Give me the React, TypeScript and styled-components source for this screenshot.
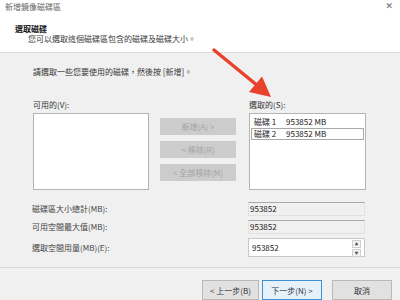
import styled, { createGlobalStyle } from 'styled-components';

const GlobalStyle = createGlobalStyle`
	html, body {
		margin: 0;
		padding: 0;
		background: #f0f0f0;
	}
	body {
		font-family: "Noto Sans CJK TC", "Noto Sans", "Liberation Sans", sans-serif;
		font-size: 8px;
		color: #353535;
	}
`;

const Dialog = styled.div`
	position: relative;
	width: 400px;
	height: 300px;
	overflow: hidden;
	display: flex;
	flex-direction: column;
	background: #f0f0f0;
`;

const Header = styled.div`
	height: 53px;
	background: #ffffff;
	border-bottom: 1px solid #d9d9d9;
	display: flex;
	flex-direction: column;
`;

const TitleBar = styled.div`
	height: 13px;
	padding: 0 7px 0 5px;
	display: flex;
	align-items: center;
	justify-content: space-between;
	color: #666;
	line-height: 13px;
`;

const Close = styled.span`
	font-family: "DejaVu Sans", sans-serif;
	font-size: 9px;
	color: #666;
`;

const Heading = styled.div`
	margin: 11px 0 0 15px;
	font-weight: 700;
	line-height: 10px;
	color: #111;
`;

const SubHeading = styled.div`
	margin-left: 28px;
	line-height: 10px;
	color: #3a3a3a;
`;

const Body = styled.div`
	height: 218px;
	padding: 14px 0 0 33px;
	box-sizing: border-box;
	border-bottom: 1px solid #dadada;
`;

const Text = styled.div`
	line-height: 10px;
`;

const Lists = styled.div`
	display: flex;
	margin-top: 23px;
`;

const Column = styled.div<{ $width: number }>`
	width: ${({ $width }) => $width}px;
	display: flex;
	flex-direction: column;
	gap: 3px;
`;

const ListBox = styled.div`
	height: 77px;
	box-sizing: border-box;
	background: #ffffff;
	border: 1px solid #b4b4b4;
	padding: 2px 1px;
`;

const ListItem = styled.div<{ $focused?: boolean }>`
	display: flex;
	height: 10px;
	line-height: 10px;
	padding-left: 2px;
	border: 1px solid ${({ $focused }) => ($focused ? '#a8a8a8' : 'transparent')};
	color: #222;
`;

const ItemName = styled.span`
	width: 32px;
`;

const Buttons = styled.div`
	width: 76px;
	margin: 18px 13px 0 11px;
	display: flex;
	flex-direction: column;
	gap: 6px;
`;

const DisabledButton = styled.div`
	height: 17px;
	background: #cccccc;
	color: #a3a3a3;
	display: flex;
	align-items: center;
	justify-content: center;
`;

const Sizes = styled.div`
	margin-top: 12px;
	display: grid;
	grid-template-columns: 216px 117px;
	grid-template-rows: 14px 14px 19px;
	row-gap: 4px;
	align-items: center;
	margin-left: -1px;
`;

const Label = styled.div`
	line-height: 10px;
	color: #444;
`;

const ReadOnly = styled.div`
	height: 14px;
	box-sizing: border-box;
	border: 1px solid #e2e2e2;
	border-top-color: #a9a9a9;
	padding-left: 1px;
	line-height: 12px;
	color: #222;
`;

const SpinField = styled.div`
	height: 19px;
	box-sizing: border-box;
	background: #ffffff;
	border: 1px solid #c8c8c8;
	display: flex;
	align-items: center;
	justify-content: space-between;
	padding: 0 3px 0 3px;
	color: #222;
`;

const Spinner = styled.div`
	width: 9px;
	height: 16px;
	display: flex;
	flex-direction: column;
	gap: 1px;
`;

const SpinButton = styled.div`
	flex: 1;
	border: 1px solid #cfcfcf;
	background: #f3f3f3;
	font-size: 4px;
	line-height: 6px;
	text-align: center;
	color: #555;
`;

const Footer = styled.div`
	flex: 1;
	display: flex;
	justify-content: flex-end;
	padding: 12px 8px 0 0;
	gap: 3px;
`;

const Button = styled.div<{ $primary?: boolean; $width: number; $gap?: number }>`
	width: ${({ $width }) => $width}px;
	height: 20px;
	box-sizing: border-box;
	margin-left: ${({ $gap }) => $gap ?? 0}px;
	background: ${({ $primary }) => ($primary ? '#e5f1fb' : '#e1e1e1')};
	border: 1px solid ${({ $primary }) => ($primary ? '#3d8fd6' : '#b9b9b9')};
	display: flex;
	justify-content: center;
	padding-top: 4px;
	color: #333;
`;

const Overlay = styled.svg`
	position: absolute;
	left: 0;
	top: 0;
	pointer-events: none;
`;

export default function App() {
	return (
		<>
			<GlobalStyle />
			<Dialog>
				<Header>
					<TitleBar>
						<span>新增鏡像磁碟區</span>
						<Close>✕</Close>
					</TitleBar>
					<Heading>選取磁碟</Heading>
					<SubHeading>您可以選取這個磁碟區包含的磁碟及磁碟大小。</SubHeading>
				</Header>
				<Body>
					<Text>請選取一些您要使用的磁碟，然後按 [新增]。</Text>
					<Lists>
						<Column $width={116}>
							<Text>可用的(V):</Text>
							<ListBox />
						</Column>
						<Buttons>
							<DisabledButton>新增(A) &gt;</DisabledButton>
							<DisabledButton>&lt; 移除(R)</DisabledButton>
							<DisabledButton>&lt; 全部移除(M)</DisabledButton>
						</Buttons>
						<Column $width={117}>
							<Text>選取的(S):</Text>
							<ListBox>
								<ListItem>
									<ItemName>磁碟 1</ItemName>953852 MB
								</ListItem>
								<ListItem $focused>
									<ItemName>磁碟 2</ItemName>953852 MB
								</ListItem>
							</ListBox>
						</Column>
					</Lists>
					<Sizes>
						<Label>磁碟區大小總計(MB):</Label>
						<ReadOnly>953852</ReadOnly>
						<Label>可用空間最大值(MB):</Label>
						<ReadOnly>953852</ReadOnly>
						<Label>選取空間用量(MB)(E):</Label>
						<SpinField>
							953852
							<Spinner>
								<SpinButton>▲</SpinButton>
								<SpinButton>▼</SpinButton>
							</Spinner>
						</SpinField>
					</Sizes>
				</Body>
				<Footer>
					<Button $width={57}>&lt; 上一步(B)</Button>
					<Button $width={60} $primary>下一步(N) &gt;</Button>
					<Button $width={60} $gap={7}>取消</Button>
				</Footer>
				<Overlay width={400} height={300} viewBox="0 0 400 300">
					<line x1={214} y1={50} x2={258} y2={86} stroke="#e8412c" strokeWidth={3.5} strokeLinecap="round" />
					<polygon points="271,97 249,92 262,76.5" fill="#e8412c" />
				</Overlay>
			</Dialog>
		</>
	);
}
